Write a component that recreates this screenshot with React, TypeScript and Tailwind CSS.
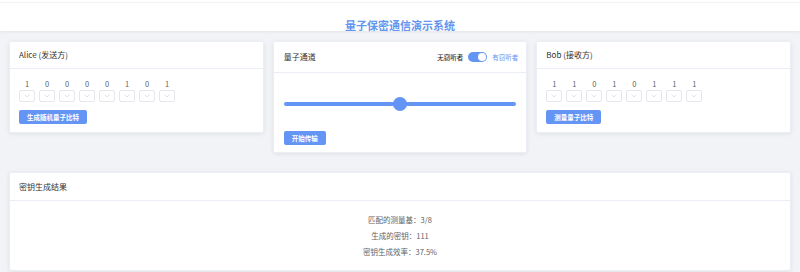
import { ChevronDown } from "lucide-react";

const aliceBits = [1, 0, 0, 0, 0, 1, 0, 1];
const bobBits = [1, 1, 0, 1, 0, 1, 1, 1];

const font = { fontFamily: '"Noto Sans CJK SC", "Noto Sans", sans-serif' };

function BitRow({ bits }: { bits: number[] }) {
  return (
    <div className="flex gap-[4px]">
      {bits.map((b, i) => (
        <div key={i} className="flex flex-col items-center w-[16px]">
          <span className="text-[7.5px] leading-[10px] text-[#606266]">{b}</span>
          <div className="mt-[1px] h-[12px] w-[16px] border border-[#e4e7ed] rounded-[2px] flex items-center justify-center">
            <ChevronDown size={8} strokeWidth={1.5} className="text-[#c0c4cc]" />
          </div>
        </div>
      ))}
    </div>
  );
}

function BlueButton({ label }: { label: string }) {
  return (
    <button className="h-[14px] px-[8px] rounded-[2px] bg-[#6495f5] text-white text-[6.5px] font-bold leading-[14px] whitespace-nowrap">
      {label}
    </button>
  );
}

export default function App() {
  return (
    <div className="w-[800px] h-[272px] bg-[#f2f3f6] overflow-hidden leading-none" style={font}>
      {/* header */}
      <div className="h-[31px] bg-white shadow-[0_1px_3px_rgba(0,0,0,0.06)]">
        <div className="h-[3px] border-b border-[#f3f3f3]" />
        <h1 className="pt-[17px] text-center text-[11px] leading-[11px] font-bold text-[#6495f0]">
          量子保密通信演示系统
        </h1>
      </div>

      <div className="px-[9px] pt-[10px]">
        <div className="flex items-start gap-[9px]">
          {/* Alice */}
          <div className="flex-1 bg-white rounded-[2px] shadow-[0_1px_4px_rgba(0,0,0,0.08)] border border-[#ebeef5]">
            <div className="h-[27px] px-[9px] flex items-center border-b border-[#ebeef5] text-[8px] text-[#303133]">
              Alice (发送方)
            </div>
            <div className="px-[9px] pt-[10px] pb-[8px]">
              <BitRow bits={aliceBits} />
              <div className="mt-[8px] flex">
                <BlueButton label="生成随机量子比特" />
              </div>
            </div>
          </div>

          {/* channel */}
          <div className="flex-1 bg-white rounded-[2px] shadow-[0_1px_4px_rgba(0,0,0,0.08)] border border-[#ebeef5]">
            <div className="h-[31px] pl-[10px] pr-[8px] flex items-center justify-between border-b border-[#ebeef5]">
              <span className="text-[8px] text-[#303133]">量子通道</span>
              <div className="flex items-center gap-[5px] text-[6.5px]">
                <span className="text-[#303133] font-medium">无窃听者</span>
                <div className="w-[19px] h-[10px] rounded-full bg-[#6495f5] flex items-center justify-end px-[1px]">
                  <div className="w-[8px] h-[8px] rounded-full bg-white" />
                </div>
                <span className="text-[#6495f5]">有窃听者</span>
              </div>
            </div>
            <div className="px-[10px] pt-[24px] pb-[7px]">
              <div className="relative h-[14px] flex items-center">
                <div className="h-[4px] w-full rounded-full bg-[#6495f5]" />
                <div className="absolute left-1/2 top-0 -translate-x-1/2 w-[14px] h-[14px] rounded-full bg-[#6495f5]" />
              </div>
              <div className="mt-[20px] flex">
                <BlueButton label="开始传输" />
              </div>
            </div>
          </div>

          {/* Bob */}
          <div className="flex-1 bg-white rounded-[2px] shadow-[0_1px_4px_rgba(0,0,0,0.08)] border border-[#ebeef5]">
            <div className="h-[27px] px-[9px] flex items-center border-b border-[#ebeef5] text-[8px] text-[#303133]">
              Bob (接收方)
            </div>
            <div className="px-[9px] pt-[10px] pb-[8px]">
              <BitRow bits={bobBits} />
              <div className="mt-[8px] flex">
                <BlueButton label="测量量子比特" />
              </div>
            </div>
          </div>
        </div>

        {/* result */}
        <div className="mt-[19px] bg-white rounded-[2px] shadow-[0_1px_4px_rgba(0,0,0,0.08)] border border-[#ebeef5]">
          <div className="h-[28px] px-[9px] flex items-center border-b border-[#ebeef5] text-[8px] text-[#303133]">
            密钥生成结果
          </div>
          <div className="pt-[11px] pb-[10px] flex flex-col items-center text-[7.5px] leading-[16px] text-[#606266]">
            <span>匹配的测量基：3/8</span>
            <span>生成的密钥：111</span>
            <span>密钥生成效率：37.5%</span>
          </div>
        </div>
      </div>
    </div>
  );
}
